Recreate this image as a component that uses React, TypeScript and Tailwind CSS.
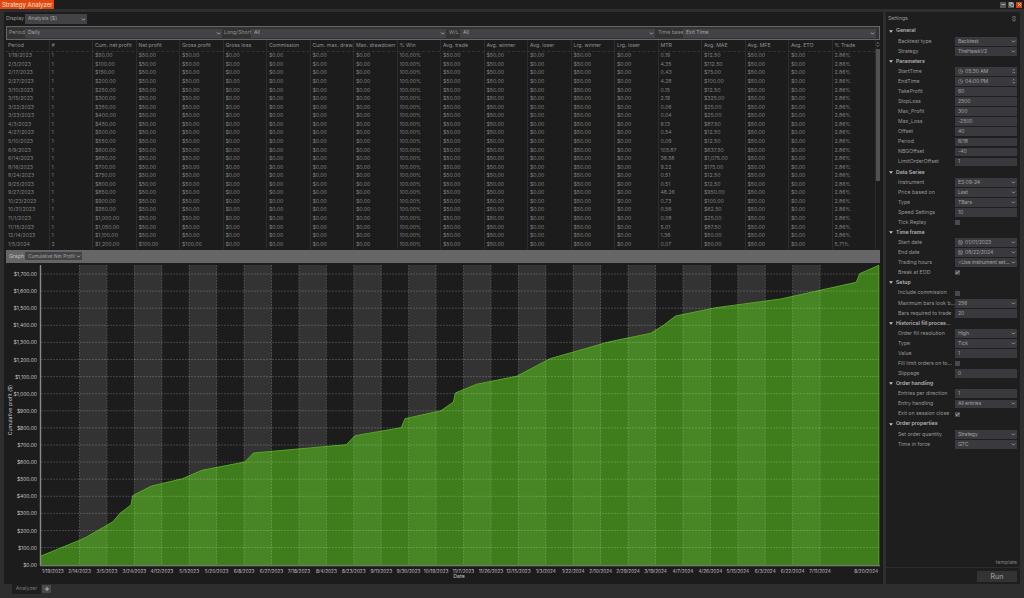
import { ChevronDown, Clock, CalendarDays, Check, Pin, Minus, Copy, X, Plus } from 'lucide-react'

const dates = ['1/19/2023','2/3/2023','2/17/2023','2/27/2023','3/10/2023','3/15/2023','3/22/2023','3/23/2023','4/3/2023','4/27/2023','5/10/2023','6/9/2023','6/14/2023','8/16/2023','8/24/2023','9/25/2023','9/27/2023','10/23/2023','10/31/2023','11/1/2023','11/15/2023','12/14/2023','1/5/2024']
const mtr = ['0.19','4.35','0.43','4.28','0.15','2.19','0.06','0.04','6.13','0.54','0.09','105.87','36.58','9.22','0.51','0.51','48.26','0.73','0.56','0.08','5.01','1.36','0.07']
const mae = ['$12.50','$112.50','$75.00','$100.00','$12.50','$325.00','$25.00','$25.00','$87.50','$12.50','$12.50','$637.50','$1,075.00','$175.00','$12.50','$12.50','$950.00','$100.00','$62.50','$25.00','$87.50','$50.00','$50.00']
const headers = ['Period','#','Cum. net profit','Net profit','Gross profit','Gross loss','Commission','Cum. max. draw.','Max. drawdown','% Win','Avg. trade','Avg. winner','Avg. loser','Lrg. winner','Lrg. loser','MTR','Avg. MAE','Avg. MFE','Avg. ETO','% Trade']

const money = (n: number) => '$' + n.toLocaleString('en-US', { minimumFractionDigits: 2 })

const rows = dates.map((d, i) => {
  const last = i === dates.length - 1
  const net = last ? 100 : 50
  return [d, last ? '2' : '1', money(last ? 1200 : (i + 1) * 50), money(net), money(net), '$0.00', '$0.00', '$0.00', '$0.00', '100.00%', '$50.00', '$50.00', '$0.00', '$50.00', '$0.00', mtr[i], mae[i], '$50.00', '$0.00', last ? '5.71%' : '2.86%']
})

type Setting = { label: string; value?: string; kind?: 'select' | 'input' | 'time' | 'date' | 'check'; checked?: boolean }

const settings: Setting[] = [
  { label: 'General' },
  { label: 'Backtest type', value: 'Backtest', kind: 'select' },
  { label: 'Strategy', value: 'TheHawkV2', kind: 'select' },
  { label: 'Parameters' },
  { label: 'StartTime', value: '05:30 AM', kind: 'time' },
  { label: 'EndTime', value: '04:00 PM', kind: 'time' },
  { label: 'TakeProfit', value: '60', kind: 'input' },
  { label: 'StopLoss', value: '2500', kind: 'input' },
  { label: 'Max_Profit', value: '300', kind: 'input' },
  { label: 'Max_Loss', value: '-2500', kind: 'input' },
  { label: 'Offset', value: '40', kind: 'input' },
  { label: 'Period', value: '6/18', kind: 'input' },
  { label: 'NBGOffset', value: '-40', kind: 'input' },
  { label: 'LimitOrderOffset', value: '1', kind: 'input' },
  { label: 'Data Series' },
  { label: 'Instrument', value: 'ES 09-24', kind: 'select' },
  { label: 'Price based on', value: 'Last', kind: 'select' },
  { label: 'Type', value: 'TBars', kind: 'select' },
  { label: 'Speed Settings', value: '10', kind: 'input' },
  { label: 'Tick Replay', kind: 'check' },
  { label: 'Time frame' },
  { label: 'Start date', value: '01/01/2023', kind: 'date' },
  { label: 'End date', value: '08/22/2024', kind: 'date' },
  { label: 'Trading hours', value: '<Use instrument set...', kind: 'select' },
  { label: 'Break at EOD', kind: 'check', checked: true },
  { label: 'Setup' },
  { label: 'Include commission', kind: 'check' },
  { label: 'Maximum bars look b...', value: '256', kind: 'select' },
  { label: 'Bars required to trade', value: '20', kind: 'input' },
  { label: 'Historical fill proces...' },
  { label: 'Order fill resolution', value: 'High', kind: 'select' },
  { label: 'Type', value: 'Tick', kind: 'select' },
  { label: 'Value', value: '1', kind: 'input' },
  { label: 'Fill limit orders on to...', kind: 'check' },
  { label: 'Slippage', value: '0', kind: 'input' },
  { label: 'Order handling' },
  { label: 'Entries per direction', value: '1', kind: 'input' },
  { label: 'Entry handling', value: 'All entries', kind: 'select' },
  { label: 'Exit on session close', kind: 'check', checked: true },
  { label: 'Order properties' },
  { label: 'Set order quantity', value: 'Strategy', kind: 'select' },
  { label: 'Time in force', value: 'GTC', kind: 'select' },
]

const tickDates = ['2/14/2023','3/5/2023','3/24/2023','4/12/2023','5/1/2023','5/20/2023','6/8/2023','6/27/2023','7/18/2023','8/4/2023','8/23/2023','9/11/2023','9/30/2023','10/19/2023','11/7/2023','11/26/2023','12/15/2023','1/3/2024','1/22/2024','2/10/2024','2/29/2024','3/19/2024','4/7/2024','4/26/2024','5/15/2024','6/3/2024','6/22/2024','7/11/2024']
const tickX = tickDates.map((_, i) => 79.5 + i * 27.43)
const yAt = (v: number) => 564.7 - v * 0.171

const curve = '41,556 79,540.5 86,537.3 113,521.7 120,513.3 131,505 132.7,495.7 139.6,492 151.5,486 182.6,478.7 201.8,470.3 244.8,462 253.4,453 346.3,444.7 354.9,435.7 401.3,427.7 405,418.7 441,410.7 453.4,402 455.4,393 476.4,384.3 516.6,376.3 550,358.7 608.5,342 650.6,333.3 663.5,325.3 675.5,316 716,307.7 780.7,299 856.3,282.3 859.7,273.7 878.8,265.3'

function Select({ label, className }: { label: string; className: string }) {
  return (
    <div className={`flex items-center justify-between bg-[#434347] pl-[3px] pr-[1px] text-[#a4a4a4] ${className}`}>
      <span className="truncate">{label}</span>
      <ChevronDown size={5} strokeWidth={3.5} className="shrink-0 text-[#ccc]" />
    </div>
  )
}

function SettingControl({ s }: { s: Setting }) {
  if (s.kind === 'check') {
    return (
      <div className="flex w-[62px] items-center">
        <div className="flex size-[5px] items-center justify-center bg-[#4a4a4e] text-[#ccc]">
          {s.checked && <Check size={5} strokeWidth={4} />}
        </div>
      </div>
    )
  }
  const icon = s.kind === 'time' ? <Clock size={5} className="mr-[2px] shrink-0" /> : s.kind === 'date' ? <CalendarDays size={5} className="mr-[2px] shrink-0" /> : null
  return (
    <div className="flex h-[8.8px] w-[62px] items-center bg-[#3a3a3e] pl-[3px] pr-[1px] text-[#a0a0a0]">
      {icon}
      <span className="flex-1 whitespace-nowrap tracking-[-0.12px]">{s.value}</span>
      {s.kind === 'time' && (
        <div className="mr-[1px] flex flex-col text-[#bbb]">
          <ChevronDown size={3.5} strokeWidth={4} className="rotate-180" />
          <ChevronDown size={3.5} strokeWidth={4} />
        </div>
      )}
      {(s.kind === 'select' || s.kind === 'date') && <ChevronDown size={5} strokeWidth={3.5} className="shrink-0 text-[#bbb]" />}
    </div>
  )
}

function SettingRow({ s }: { s: Setting }) {
  if (!s.kind) {
    return (
      <div className="flex h-[10.08px] items-center pl-[3px] font-semibold text-[#b4b4b4]">
        <svg viewBox="0 0 6 4" className="mr-[3px] h-[3px] w-[4px] fill-[#c4c4c4]"><polygon points="0,0 6,0 3,4" /></svg>
        {s.label}
      </div>
    )
  }
  return (
    <div className="flex h-[10.08px] items-center justify-between pl-[12px] pr-[3px] text-[#989898]">
      <span className="whitespace-nowrap">{s.label}</span>
      <SettingControl s={s} />
    </div>
  )
}

function Chart() {
  return (
    <svg viewBox="6 263 874 316" className="h-[316px] w-[874px] font-['Inter',sans-serif]">
      {tickX.map((x, i) => i % 2 === 0 && <rect key={x} x={x} y={265} width={27.43} height={300} fill="#333333" />)}
      <polygon points={`41,565 ${curve} 878.8,565`} fill="rgba(85,188,28,0.6)" />
      <polyline points={curve} fill="none" stroke="#55a71f" strokeWidth={1} />
      <line x1={878.8} y1={265} x2={878.8} y2={565} stroke="#55a71f" strokeWidth={1} />
      {Array.from({ length: 18 }).map((_, i) => (
        <g key={i}>
          {i > 0 && <line x1={41} x2={879} y1={yAt(i * 100)} y2={yAt(i * 100)} stroke="#ffffff" strokeOpacity={0.26} strokeWidth={0.7} strokeDasharray="2 1" />}
          <text x={37} y={yAt(i * 100) + 2} textAnchor="end" fontSize={5} fill="#c4c4c4">{'$' + (i * 100).toLocaleString('en-US') + '.00'}</text>
        </g>
      ))}
      {tickX.map((x, i) => (
        <g key={x}>
          <line x1={x} x2={x} y1={265} y2={565} stroke="#ffffff" strokeOpacity={0.24} strokeWidth={0.7} strokeDasharray="2 1" />
          <text x={x} y={573} textAnchor="middle" fontSize={4.7} fill="#c4c4c4">{tickDates[i]}</text>
        </g>
      ))}
      <text x={42} y={573} fontSize={4.7} fill="#c4c4c4">1/19/2023</text>
      <text x={878} y={573} textAnchor="end" fontSize={4.7} fill="#c4c4c4">8/20/2024</text>
      <line x1={40.5} x2={40.5} y1={265} y2={566} stroke="#8a8a8a" strokeWidth={1.4} />
      <line x1={40} x2={880} y1={565.6} y2={565.6} stroke="#777777" strokeWidth={1.2} />
      <text x={459} y={578} textAnchor="middle" fontSize={5.2} fill="#c4c4c4">Date</text>
      <text x={12} y={410} textAnchor="middle" fontSize={5.2} fill="#c4c4c4" transform="rotate(-90 12 410)">Cumulative profit ($)</text>
    </svg>
  )
}

export default function App() {
  return (
    <div className="flex h-[598px] w-[1024px] flex-col overflow-hidden bg-[#2e2e2e] font-['Inter',sans-serif] text-[5.2px] leading-none">
      {/* title bar */}
      <div className="flex h-[9px] items-center justify-between bg-[#1d1d1d] pr-[2px]">
        <div className="flex h-full w-[54px] items-center whitespace-nowrap bg-[#e2470f] pl-[2px] text-[6px] text-[#ffe6da]">Strategy Analyzer</div>
        <div className="flex gap-[2px]">
          <div className="flex size-[6px] items-center justify-center bg-[#555] text-[#ddd]"><Minus size={5} strokeWidth={3} /></div>
          <div className="flex size-[6px] items-center justify-center bg-[#555] text-[#ddd]"><Copy size={5} strokeWidth={3} /></div>
          <div className="flex size-[6px] items-center justify-center bg-[#c8441a] text-[#ffe]"><X size={5} strokeWidth={3} /></div>
        </div>
      </div>

      <div className="mt-[3px] flex h-[572px] gap-[3px] pl-[4px] pr-[3px]">
        {/* main panel */}
        <div className="flex w-[879px] flex-col bg-[#1c1c1c] px-[2px] pt-[2px]">
          <div className="flex h-[10px] items-center text-[#9a9a9a]">
            <span className="w-[19px]">Display</span>
            <Select label="Analysis ($)" className="h-full w-[62px]" />
          </div>
          <div className="mt-[2px] flex h-[14px] w-[874px] items-center border border-[#666] bg-[#333] pl-[2px] whitespace-nowrap text-[#909090]">
            <span className="w-[16px]">Period</span>
            <Select label="Daily" className="h-[9px] w-[197px]" />
            <span className="ml-[2px] w-[27px]">Long/Short</span>
            <Select label="All" className="h-[9px] w-[195px]" />
            <span className="ml-[3px] w-[11px]">W/L</span>
            <Select label="All" className="h-[9px] w-[195px]" />
            <span className="ml-[3px] w-[25px]">Time base</span>
            <Select label="Exit Time" className="h-[9px] w-[193px]" />
          </div>

          <div className="flex h-[208.8px] w-[874px]">
            <div className="w-[870px]">
              <div className="flex h-[11.7px] border-b border-dashed border-[#333]">
                {headers.map((h) => (
                  <div key={h} className="flex w-[43.5px] items-center overflow-hidden border-r border-[#2c2c2c] pl-[2px] whitespace-nowrap text-[#929292]">{h}</div>
                ))}
              </div>
              {rows.map((r) => (
                <div key={r[0]} className="flex h-[8.57px]">
                  {r.map((c, j) => (
                    <div key={j} className="flex w-[43.5px] items-center border-r border-[#2c2c2c] pl-[2px] whitespace-nowrap text-[#808080]">{c}</div>
                  ))}
                </div>
              ))}
            </div>
            {/* scrollbar */}
            <div className="flex w-[4px] flex-col items-center">
              <ChevronDown size={4} strokeWidth={4} className="mt-[1px] rotate-180 text-[#aaa]" />
              <ChevronDown size={4} strokeWidth={4} className="mt-[-1px] text-[#aaa]" />
              <div className="mt-[1px] h-[132px] w-[4px] bg-[#505050]" />
            </div>
          </div>

          <div className="mt-[1.2px] flex h-[13px] w-[874px] items-center bg-[#666] pl-[3px] text-[#c0c0c0]">
            <span className="w-[16px]">Graph</span>
            <Select label="Cumulative Net Profit" className="h-[8px] w-[57px] text-[4.7px]" />
          </div>
          <Chart />
        </div>

        {/* settings panel */}
        <div className="flex w-[134px] flex-col bg-[#1e1e1e]">
          <div className="flex h-[13px] items-center justify-between pl-[2px] pr-[3px] text-[#9a9a9a]">
            <span>Settings</span>
            <Pin size={6} className="text-[#999]" />
          </div>
          <div className="mt-[1px] flex-1">
            {settings.map((s, i) => <SettingRow key={i} s={s} />)}
          </div>
          <div className="pb-[2px] pr-[3px] text-right text-[#808080]">template</div>
          <div className="flex h-[17px] items-center justify-end border-t border-[#2c2c2c] pr-[3px]">
            <div className="flex h-[11px] w-[40px] items-center justify-center bg-[#333] text-[7px] text-[#aaa]">Run</div>
          </div>
        </div>
      </div>

      {/* bottom tabs */}
      <div className="flex items-center pl-[12px]">
        <div className="flex h-[10px] w-[29px] items-center justify-center bg-[#1e1e1e] text-[#777]">Analyzer</div>
        <div className="ml-[1px] flex h-[8px] w-[9px] items-center justify-center bg-[#4a4a4a] text-[#ccc]"><Plus size={6} strokeWidth={3} /></div>
      </div>
    </div>
  )
}
